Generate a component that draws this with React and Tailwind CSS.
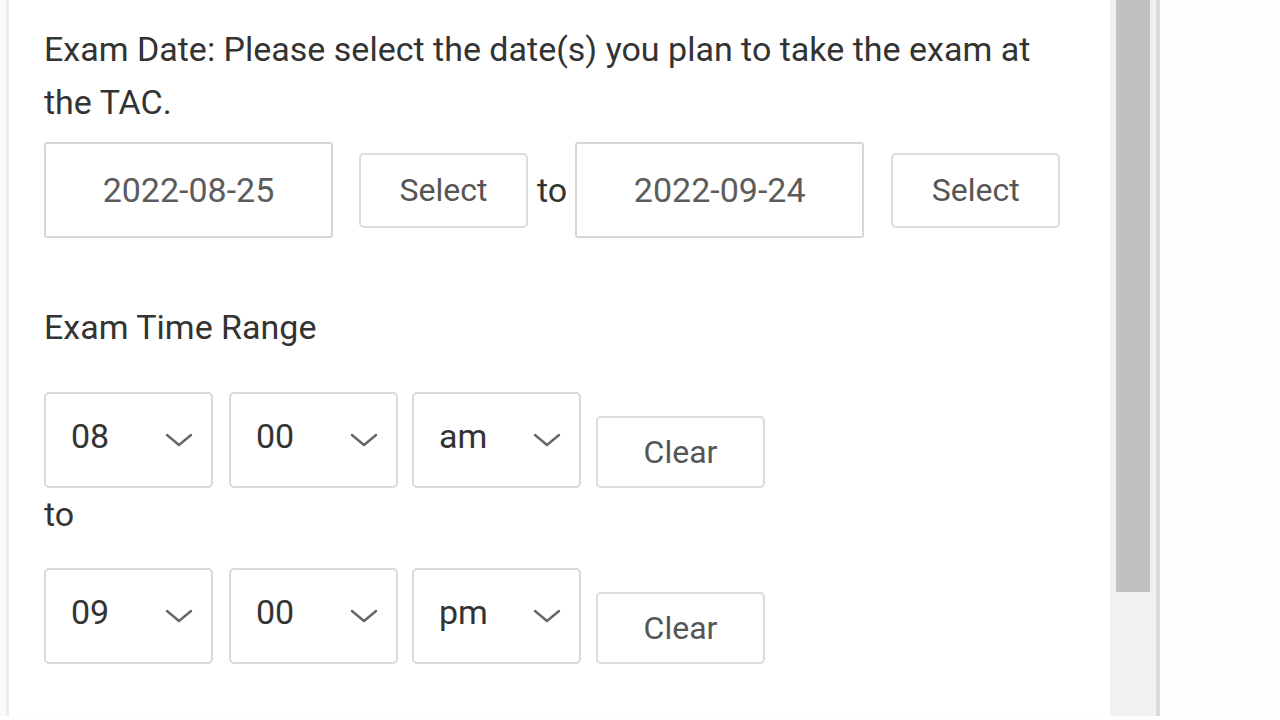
import React from 'react'

const font = { fontFamily: 'Roboto, "Noto Sans", Arial, sans-serif' }

function Chevron() {
  return (
    <svg width="28" height="16" viewBox="0 0 28 16" className="shrink-0">
      <path d="M2 3 L14 13 L26 3" fill="none" stroke="#666" strokeWidth="2.4" strokeLinecap="round" strokeLinejoin="round" />
    </svg>
  )
}

function TimeSelect({ value }) {
  return (
    <div className="flex h-[96px] w-[169px] items-start justify-between rounded-[5px] border-2 border-[#d9d9d9] bg-white pl-[25px] pr-[18px] pt-[23px]">
      <span className="text-[34px] leading-[38px] text-[#333]">{value}</span>
      <span className="mt-[15px]"><Chevron /></span>
    </div>
  )
}

function OutlineButton({ children, className = '' }) {
  return (
    <button className={`flex w-[169px] items-center justify-center rounded-[5px] border-2 border-[#dcdcdc] bg-white text-[32px] text-[#555] ${className}`}>
      {children}
    </button>
  )
}

function DateBox({ value }) {
  return (
    <div className="flex h-[96px] w-[289px] items-center justify-center rounded-[3px] border-2 border-[#d6d6d6] bg-white text-[34px] text-[#5c5c5c]">
      {value}
    </div>
  )
}

function TimeRow({ hour, minute, period }) {
  return (
    <div className="flex items-end">
      <TimeSelect value={hour} />
      <div className="ml-[16px]"><TimeSelect value={minute} /></div>
      <div className="ml-[14px]"><TimeSelect value={period} /></div>
      <OutlineButton className="ml-[15px] h-[72px]">Clear</OutlineButton>
    </div>
  )
}

export default function App() {
  return (
    <div className="h-[720px] w-[1280px] overflow-hidden bg-[#fefefe]" style={font}>
      <div className="flex h-[716px]">
        {/* left edge */}
        <div className="w-[9px] border-r-[3px] border-[#ececec] bg-[#fafafa]" />

        {/* form */}
        <div className="w-[1101px] bg-white pl-[35px] pr-[30px] pt-[23px]">
          <p className="text-[34px] leading-[53px] text-[#333]">
            Exam Date: Please select the date(s) you plan to take the exam at the TAC.
          </p>

          <div className="mt-[13px] flex items-center">
            <DateBox value="2022-08-25" />
            <OutlineButton className="ml-[26px] h-[75px]">Select</OutlineButton>
            <span className="ml-[9px] mr-[8px] text-[34px] text-[#333]">to</span>
            <DateBox value="2022-09-24" />
            <OutlineButton className="ml-[27px] h-[75px]">Select</OutlineButton>
          </div>

          <p className="mt-[63px] text-[34px] leading-[53px] text-[#333]">Exam Time Range</p>

          <div className="mt-[38px]">
            <TimeRow hour="08" minute="00" period="am" />
          </div>
          <p className="text-[34px] leading-[53px] text-[#333]">to</p>
          <div className="mt-[27px]">
            <TimeRow hour="09" minute="00" period="pm" />
          </div>
        </div>

        {/* scrollbar */}
        <div className="w-[46px] bg-[#f1f1f1] px-[6px]">
          <div className="h-[592px] bg-[#c1c1c1]" />
        </div>
        <div className="w-[4px] bg-[#dadada]" />
        <div className="flex-1 bg-[#fefefe]" />
      </div>
    </div>
  )
}
